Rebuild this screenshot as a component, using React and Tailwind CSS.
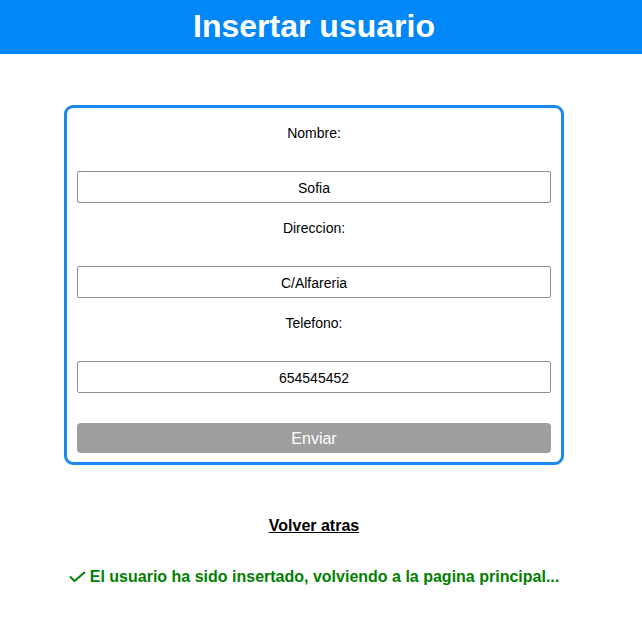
const fields = [
  ["Nombre:", "Sofia"],
  ["Direccion:", "C/Alfareria"],
  ["Telefono:", "654545452"],
];

export default function App() {
  return (
    <div className="min-h-[633px] bg-white font-['Liberation_Sans',Arial,sans-serif] text-black">
      <header className="h-[54px] bg-[#0088f8] flex items-center justify-center pr-[14px]">
        <h1 className="text-[32px] font-bold text-white leading-none -mt-[2px]">Insertar usuario</h1>
      </header>

      <div className="w-[628px]">
        <div className="w-[500px] mx-auto mt-[51px] border-[3px] border-[#1a88f0] rounded-[9px] px-[10px] pt-[17px] pb-[9px]">
          {fields.map(([label, value], i) => (
            <div key={label} className={i > 0 ? "mt-[17px]" : ""}>
              <div className="text-[14px] leading-[16px] text-center">{label}</div>
              <input
                readOnly
                value={value}
                className="mt-[30px] block w-full h-[32px] border border-[#8f8f8f] rounded-[2px] text-center text-[14px] pt-[1px] outline-none"
              />
            </div>
          ))}
          <button className="mt-[30px] w-full h-[30px] rounded-[4px] bg-[#9e9e9e] text-white text-[16px] pt-[1px]">Enviar</button>
        </div>

        <div className="mt-[49px] text-center">
          <a href="#" className="text-[16px] font-bold underline text-black">Volver atras</a>
        </div>

        <div className="mt-[27px] flex items-center justify-center gap-[4px] text-[16px] font-bold text-[#008000]">
          <svg width="17" height="11" viewBox="0 0 17 11" className="-mt-[1px]">
            <path d="M1 5.5 L5.5 10 L16 1" fill="none" stroke="#008000" strokeWidth="2" />
          </svg>
          <span>El usuario ha sido insertado, volviendo a la pagina principal...</span>
        </div>
      </div>
    </div>
  );
}
